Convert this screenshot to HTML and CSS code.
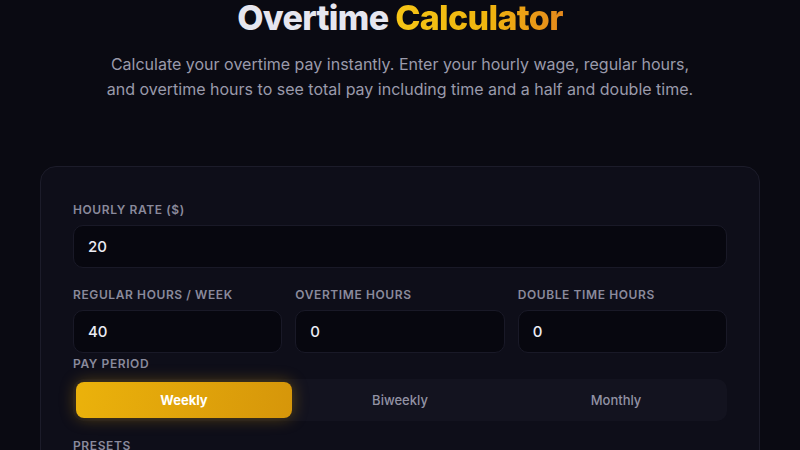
FILE: index.html
```html
<!DOCTYPE html>
<html lang="en">
<head>
<meta charset="utf-8">
<title>Overtime Calculator</title>
<link rel="stylesheet" href="styles.css">
</head>
<body>
<main class="page">
  <header class="hero">
    <h1 class="title">Overtime <span class="accent">Calculator</span></h1>
    <p class="subtitle">Calculate your overtime pay instantly. Enter your hourly wage, regular hours, and overtime hours to see total pay including time and a half and double time.</p>
  </header>
  <section class="card">
    <div class="field field-gap">
      <label class="label">Hourly Rate ($)</label>
      <div class="input">20</div>
    </div>
    <div class="grid3">
      <div class="field">
        <label class="label">Regular Hours / Week</label>
        <div class="input">40</div>
      </div>
      <div class="field">
        <label class="label">Overtime Hours</label>
        <div class="input">0</div>
      </div>
      <div class="field">
        <label class="label">Double Time Hours</label>
        <div class="input">0</div>
      </div>
    </div>
    <div class="field period">
      <label class="label">Pay Period</label>
      <div class="segmented">
        <button class="seg active">Weekly</button>
        <button class="seg">Biweekly</button>
        <button class="seg">Monthly</button>
      </div>
    </div>
    <div class="field">
      <label class="label">Presets</label>
    </div>
  </section>
</main>
</body>
</html>
```
FILE: styles.css
```css
* { box-sizing: border-box; }
html, body { margin: 0; padding: 0; }
body {
  background: #0a0a12;
  font-family: Inter, "Noto Sans", sans-serif;
  color: #e8e8f0;
  height: 450px;
  overflow: hidden;
}
.page {
  width: 720px;
  margin: 0 auto;
}
.hero { text-align: center; }
.title {
  margin: 0;
  font-size: 34px;
  line-height: 36px;
  font-weight: 800;
  letter-spacing: -0.02em;
  color: #e6e6ef;
}
.accent {
  background: linear-gradient(90deg, #f6c516 0%, #efb50f 55%, #e5891c 100%);
  -webkit-background-clip: text;
  background-clip: text;
  color: transparent;
}
.subtitle {
  margin: 16px auto 0;
  width: 600px;
  font-size: 16px;
  line-height: 25px;
  color: #9a9aab;
}
.card {
  margin-top: 64px;
  background: #0e0e19;
  border: 1px solid #1c1c2a;
  border-radius: 16px;
  padding: 34px 32px 32px;
}
.field { display: flex; flex-direction: column; }
.field-gap { margin-bottom: 18px; }
.label {
  font-size: 12px;
  line-height: 18px;
  font-weight: 600;
  letter-spacing: 0.05em;
  text-transform: uppercase;
  color: #8a8a9c;
  margin-bottom: 6px;
}
.input {
  height: 43px;
  background: #07070f;
  border: 1px solid #191927;
  border-radius: 10px;
  padding: 0 14px;
  display: flex;
  align-items: center;
  font-size: 15px;
  font-weight: 500;
  color: #ececf4;
}
.grid3 {
  display: grid;
  grid-template-columns: 1fr 1fr 1fr;
  gap: 13px;
}
.period { margin-top: 2px; margin-bottom: 16px; }
.segmented {
  display: flex;
  height: 42px;
  padding: 3px;
  background: #13131f;
  border-radius: 10px;
}
.seg {
  flex: 1;
  border: 0;
  background: transparent;
  border-radius: 8px;
  font-family: Inter, "Noto Sans", sans-serif;
  font-size: 13px;
  font-weight: 500;
  color: #9292a4;
}
.seg.active {
  background: linear-gradient(100deg, #ebb20b 0%, #d6960a 100%);
  color: #ffffff;
  font-weight: 700;
  box-shadow: 0 0 16px rgba(234, 170, 10, 0.35);
}
```
